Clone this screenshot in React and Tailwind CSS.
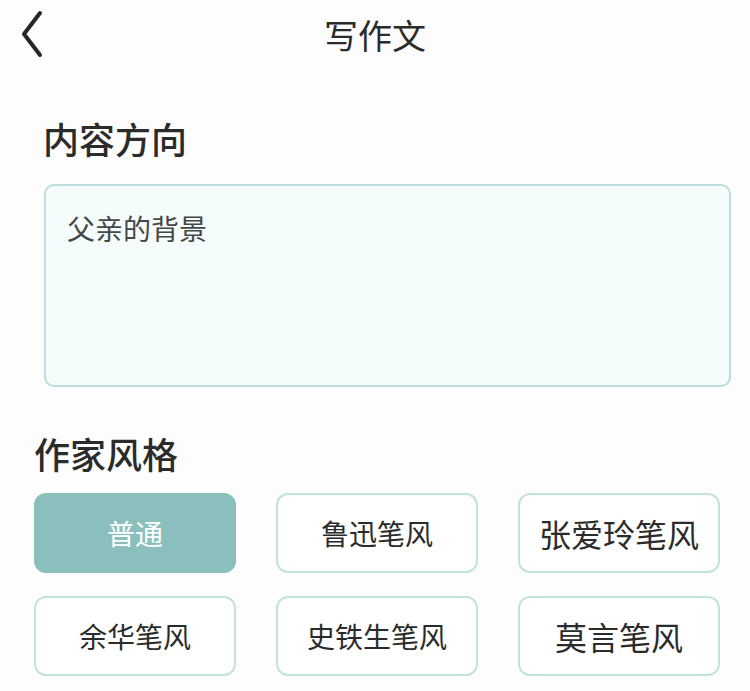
import { useState } from 'react';

const styles = ['普通', '鲁迅笔风', '张爱玲笔风', '余华笔风', '史铁生笔风', '莫言笔风'];

const App = () => {
  const [active, setActive] = useState(0);

  return (
    <div
      className="min-h-[691px] w-[750px] bg-[#fdfdfd] text-[#2b2b2b]"
      style={{ fontFamily: '"Noto Sans CJK SC", "Noto Sans", sans-serif' }}
    >
      {/* 顶部栏 */}
      <div className="relative flex h-[70px] items-center justify-center">
        <button className="absolute left-[20px] top-[10px] p-0">
          <svg width="24" height="48" viewBox="0 0 24 48" fill="none">
            <path
              d="M20 3 L4 24 L20 45"
              stroke="#262626"
              strokeWidth="4"
              strokeLinecap="round"
              strokeLinejoin="round"
            />
          </svg>
        </button>
        <h1 className="text-[34px] font-normal leading-none">写作文</h1>
      </div>

      {/* 内容方向 */}
      <div className="px-[44px] pt-[50px]">
        <h2 className="-ml-[1px] text-[36px] font-medium leading-none">内容方向</h2>
        <div className="mt-[28px] h-[203px] w-[687px] rounded-[10px] border-2 border-[#bcdedb] bg-[#f4fcfc] px-[21px] pt-[28px]">
          <p className="text-[28px] leading-none text-[#474747]">父亲的背景</p>
        </div>
      </div>

      {/* 作家风格 */}
      <div className="px-[34px] pt-[48px]">
        <h2 className="text-[36px] font-medium leading-none">作家风格</h2>
        <div className="mt-[22px] grid w-[686px] grid-cols-3 gap-x-[40px] gap-y-[23px]">
          {styles.map((name, i) => (
            <button
              key={name}
              onClick={() => setActive(i)}
              className={`flex h-[80px] items-center justify-center rounded-[12px] border-2 leading-none ${
                i % 3 === 2 ? 'text-[32px]' : 'text-[28px]'
              } ${
                active === i
                  ? 'border-[#8bbfbd] bg-[#8bbfbd] text-white'
                  : 'border-[#c3e2df] bg-white text-[#2b2b2b]'
              }`}
            >
              {name}
            </button>
          ))}
        </div>
      </div>
    </div>
  );
};

export default App;
